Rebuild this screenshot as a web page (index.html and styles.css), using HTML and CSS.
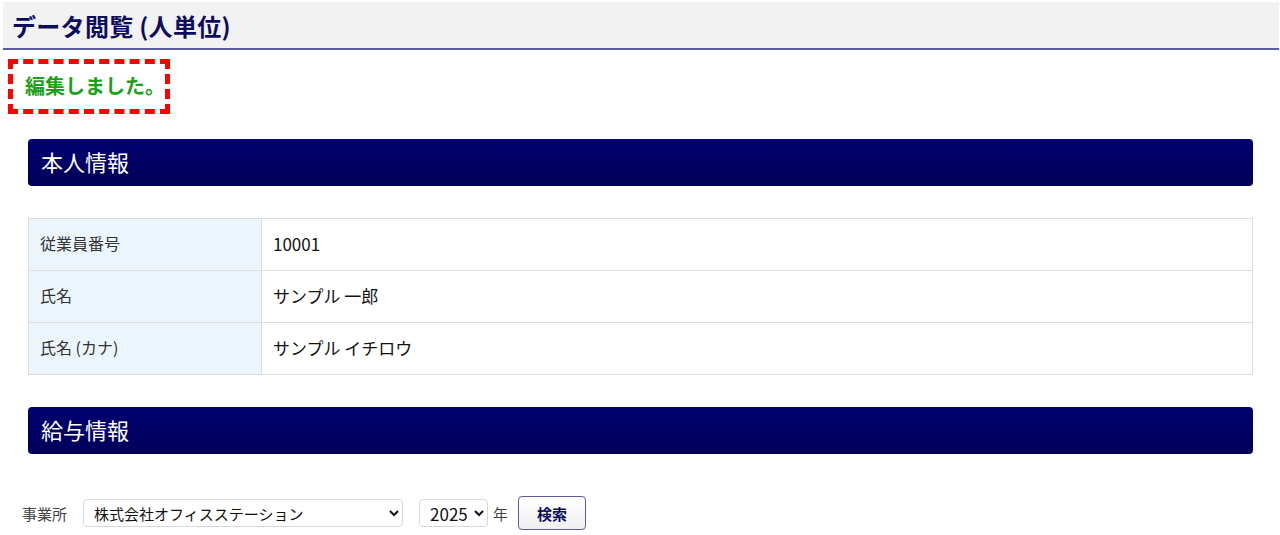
FILE: index.html
```html
<!DOCTYPE html>
<html lang="ja">
<head>
  <meta charset="UTF-8" />
  <meta name="viewport" content="width=device-width, initial-scale=1.0" />
  <title>データ閲覧 (人単位)</title>
  <link rel="stylesheet" href="styles.css">
</head>
<body>
  <div class="page">
    <div class="title-bar">
      <h1>データ閲覧 (人単位)</h1>
    </div>

    <div class="message">
      <span>編集しました。</span>
    </div>

    <div class="content">
      <div class="section-head">本人情報</div>

      <table class="info">
        <tr>
          <th>従業員番号</th>
          <td>10001</td>
        </tr>
        <tr>
          <th>氏名</th>
          <td>サンプル 一郎</td>
        </tr>
        <tr>
          <th>氏名 (カナ)</th>
          <td>サンプル イチロウ</td>
        </tr>
      </table>

      <div class="section-head">給与情報</div>
    </div>

    <form class="search">
      <label for="office">事業所</label>
      <select id="office" class="office">
        <option>株式会社オフィスステーション</option>
      </select>
      <select id="year" class="year">
        <option>2025</option>
        <option>2024</option>
      </select>
      <span class="unit">年</span>
      <button type="button" id="search">検索</button>
    </form>
  </div>
</body>
</html>
```

FILE: styles.css
```css
* {
  box-sizing: border-box;
}

body {
  margin: 0;
  font-family: 'Noto Sans CJK JP', 'Noto Sans', sans-serif;
  background-color: #fff;
  color: #333;
}

.page {
  padding: 2px 1px 0 3px;
}

.title-bar {
  background-color: #f2f2f2;
  border-bottom: 2px solid #5c5c9c;
  height: 48px;
  display: flex;
  align-items: center;
  padding-left: 9px;
}

.title-bar h1 {
  margin: 0;
  font-size: 24px;
  font-weight: bold;
  color: #0c0c5c;
  letter-spacing: 0.3px;
}

.message {
  display: flex;
  margin-top: 9px;
  margin-left: 5px;
}

.message span {
  display: block;
  border: 5px dashed #ff0000;
  padding: 8px 0 9px 12px;
  font-size: 20px;
  font-weight: bold;
  color: #1aa01a;
  line-height: 28px;
}

.content {
  margin: 25px 26px 0 25px;
}

.section-head {
  height: 47px;
  border-radius: 4px;
  background: linear-gradient(#000070, #000058);
  color: #fff;
  font-size: 22px;
  display: flex;
  align-items: center;
  padding: 0 0 3px 13px;
}

.info {
  width: 100%;
  border-collapse: collapse;
  margin: 32px 0 32px;
  font-size: 16px;
}

.info th,
.info td {
  border: 1px solid #dcdcdc;
  height: 52px;
  text-align: left;
  padding: 0 11px 3px;
}

.info th {
  width: 233px;
  background-color: #edf5fc;
  font-weight: normal;
  color: #333;
}

.info td {
  color: #111;
  font-size: 17px;
}

.search {
  display: flex;
  align-items: center;
  margin: 42px 0 0 19px;
  font-size: 15px;
  color: #444;
}

.search label {
  margin-right: 16px;
}

.search select {
  height: 28px;
  border: 1px solid #d8d8d8;
  border-radius: 4px;
  background-color: #fff;
  font-family: inherit;
  font-size: 15px;
  color: #111;
  padding: 0 4px 0 6px;
}

.office {
  width: 320px;
  margin-right: 16px;
}

.year {
  width: 69px;
  font-size: 17px !important;
}

.unit {
  margin: 0 10px 0 5px;
}

#search {
  height: 34px;
  width: 68px;
  border: 1px solid #5c5c9c;
  border-radius: 4px;
  background: linear-gradient(#fff, #f0f0f0);
  font-family: inherit;
  font-size: 15px;
  font-weight: bold;
  color: #0c0c5c;
  cursor: pointer;
}
```
